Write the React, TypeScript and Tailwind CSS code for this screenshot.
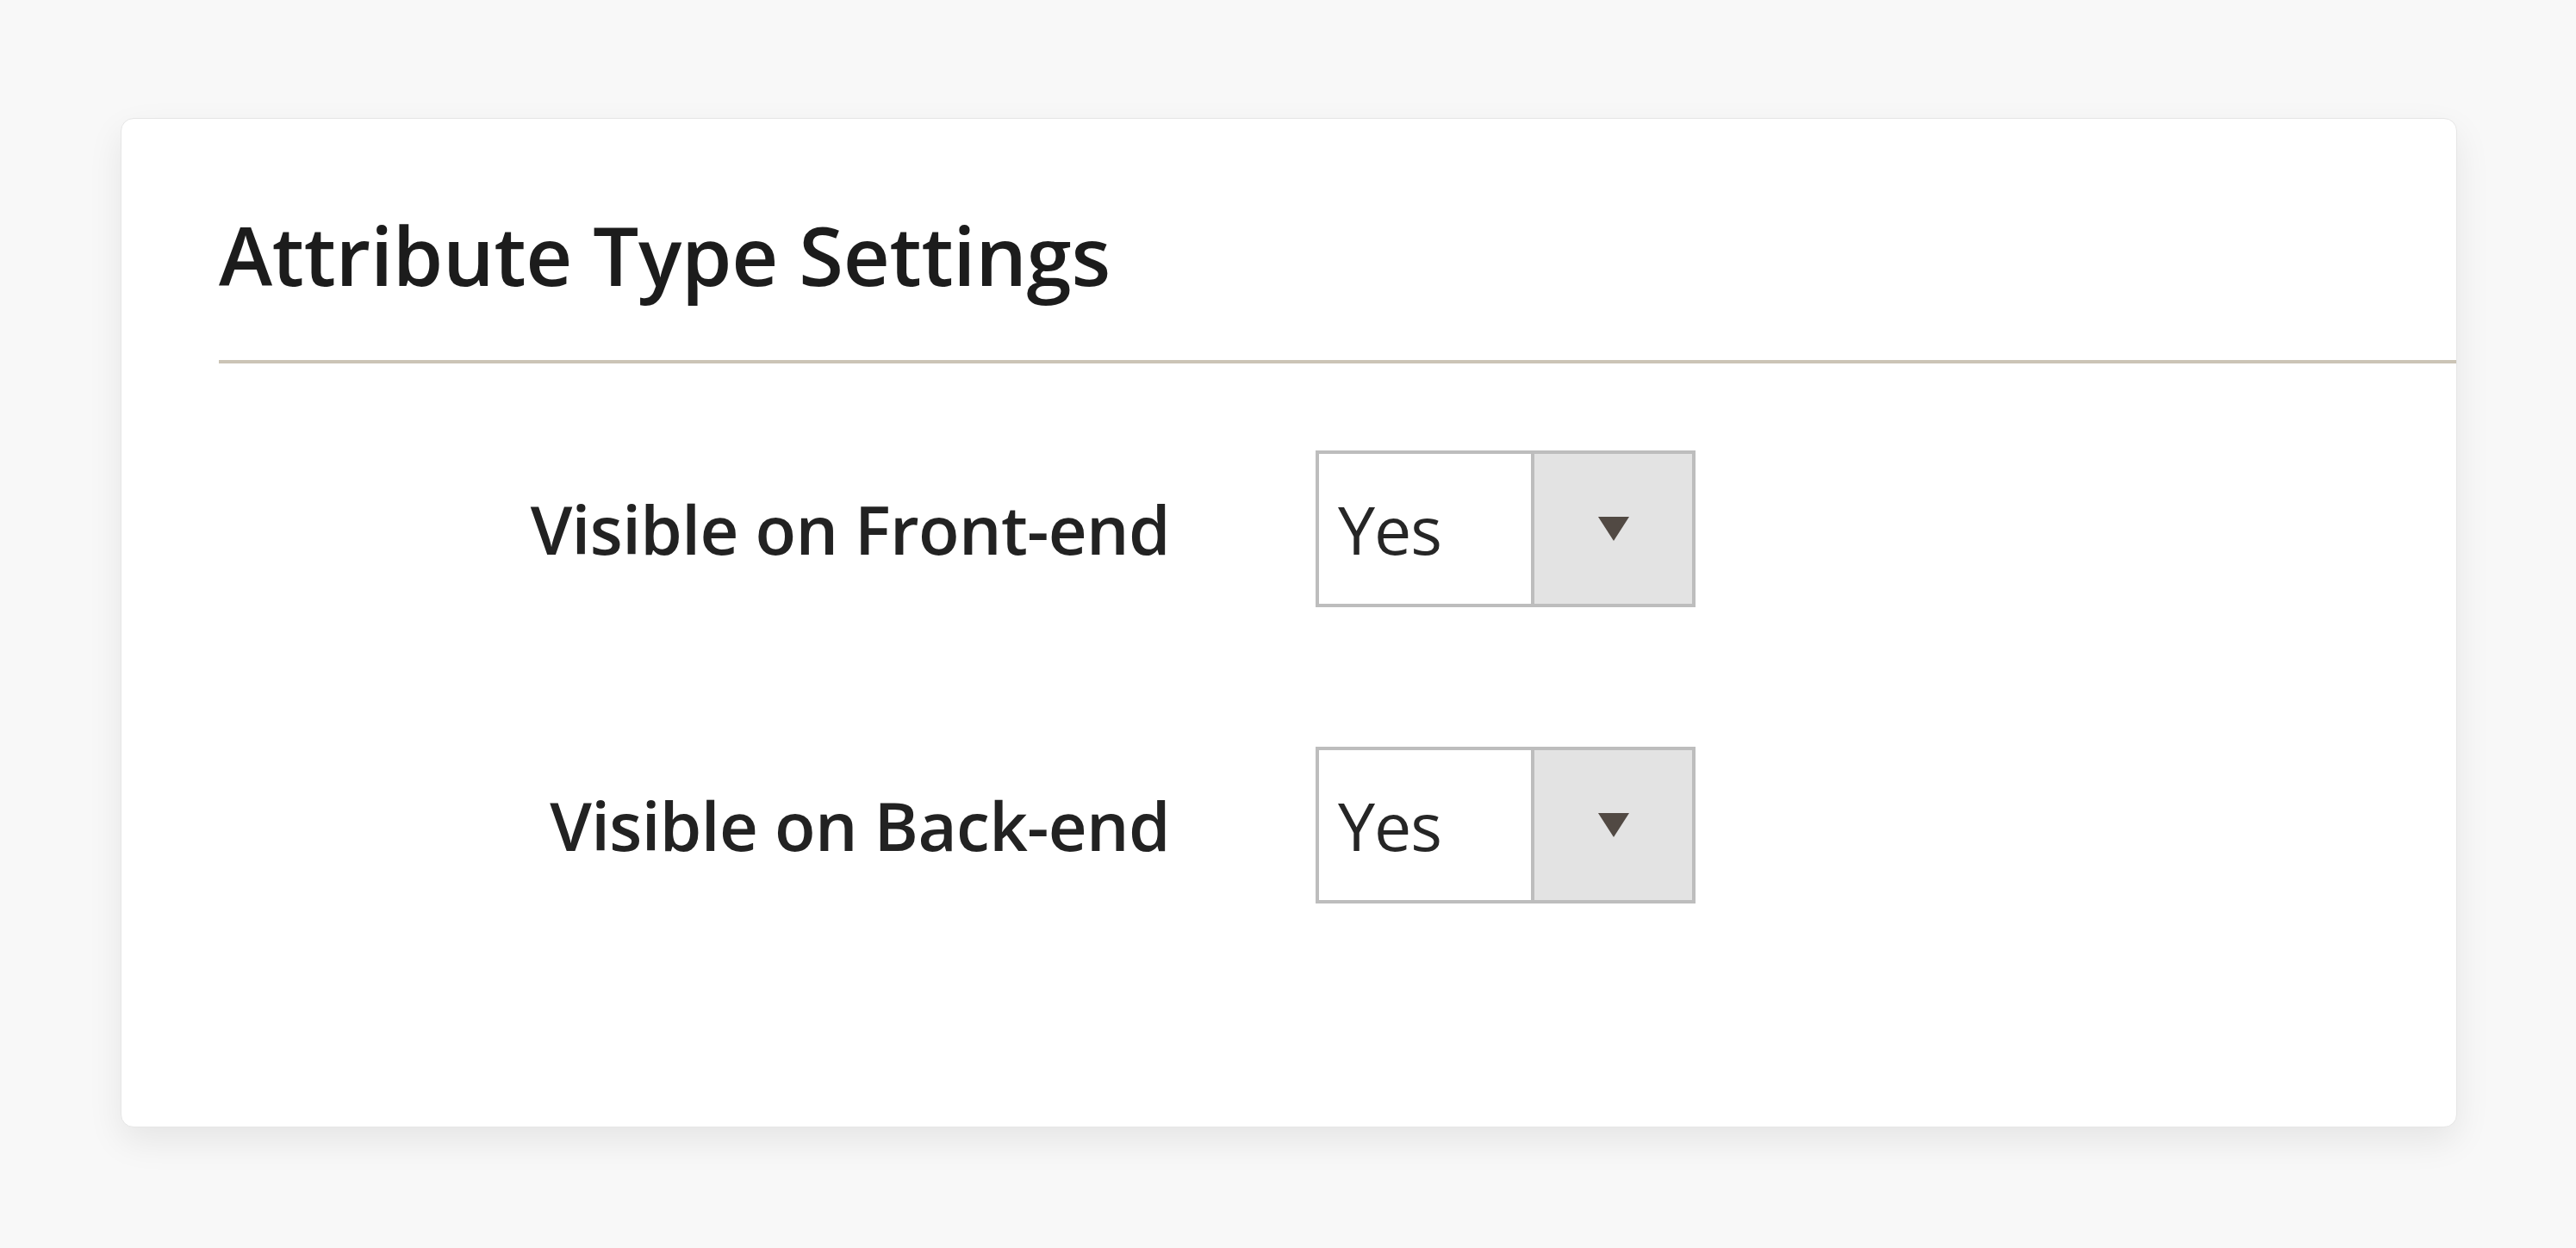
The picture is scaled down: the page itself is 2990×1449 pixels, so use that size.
import React from "react";

function Caret() {
  return (
    <svg width="36" height="28" viewBox="0 0 36 28" className="block">
      <polygon points="0,0 36,0 18,28" fill="#514943" />
    </svg>
  );
}

function SelectBox({ value }: { value: string }) {
  return (
    <div className="flex h-[182px] w-[441px] border-[4px] border-[#bdbdbd] bg-white">
      <div className="flex flex-1 items-center pl-[22px] text-[77px] font-normal leading-none tracking-[-1px] text-[#262626]">
        {value}
      </div>
      <div className="flex w-[187px] items-center justify-center border-l-[4px] border-[#bdbdbd] bg-[#e3e3e3]">
        <Caret />
      </div>
    </div>
  );
}

function Row({ label }: { label: string }) {
  return (
    <div className="flex items-center">
      <div className="w-[1104px] text-right text-[78px] font-semibold leading-none tracking-[-0.6px] text-[#222222]">
        {label}
      </div>
      <div className="ml-[169px]">
        <SelectBox value="Yes" />
      </div>
    </div>
  );
}

export default function App() {
  return (
    <div
      className="min-h-[1449px] w-full bg-[#f8f8f8] pt-[137px] pl-[140px] pr-[138px]"
      style={{ fontFamily: '"Open Sans", "Noto Sans", sans-serif' }}
    >
      <div className="h-[1172px] rounded-[15px] border border-[#e6e6e6] bg-white pl-[113px] pt-[111px] shadow-[0_16px_40px_rgba(0,0,0,0.08)]">
        <h2 className="text-[94px] font-semibold leading-[94px] tracking-[-0.3px] text-[#1c1c1c]">
          Attribute Type Settings
        </h2>
        <div className="mt-[75px] h-[4px] bg-[#cbc4b6]" />
        <div className="mt-[101px] flex flex-col gap-[162px]">
          <Row label="Visible on Front-end" />
          <Row label="Visible on Back-end" />
        </div>
      </div>
    </div>
  );
}
